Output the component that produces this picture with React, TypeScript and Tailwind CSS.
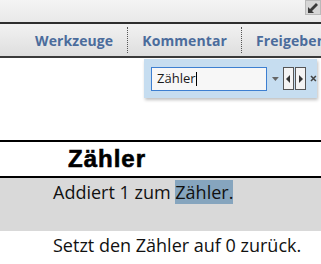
import React from 'react';

const ToolbarItem: React.FC<{ label: string; sep?: boolean }> = ({ label, sep }) => (
  <div className="flex items-center h-full">
    <span className="text-[14px] font-bold text-[#4b6c9c] tracking-[0.1px]">{label}</span>
    {sep && <div className="ml-[14px] mr-[14px] h-[26px] border-l border-dotted border-[#555]" />}
  </div>
);

const App: React.FC = () => {
  return (
    <div className="w-[321px] h-[264px] overflow-hidden bg-white relative" style={{ fontFamily: '"Open Sans", sans-serif' }}>
      {/* top strip */}
      <div className="h-[22px] bg-gradient-to-b from-[#f4f4f4] to-[#e9e9e9] flex justify-end">
        <div className="w-[16px] h-[15px] bg-[#d6d6d6] border border-[#b9b9b9] flex items-center justify-center">
          <svg width="12" height="12" viewBox="0 0 12 12">
            <path d="M1 11 L1 5 L3 7 L9 1 L11 3 L5 9 L7 11 Z" fill="#3a3a3a" />
          </svg>
        </div>
      </div>
      <div className="h-[2px] bg-[#2f2f2f]" />

      {/* toolbar */}
      <div className="h-[34px] bg-gradient-to-b from-[#f2f2f2] to-[#dedede] border-b-2 border-[#3a3a3a] flex items-center pl-[35px]">
        <ToolbarItem label="Werkzeuge" sep />
        <ToolbarItem label="Kommentar" sep />
        <ToolbarItem label="Freigeben" />
      </div>

      {/* search popup */}
      <div className="absolute left-[144px] top-[59px] w-[173px] h-[39px] bg-[#c6ddf0] shadow-[1px_2px_3px_rgba(0,0,0,0.25)] flex items-center pl-[7px]">
        <div className="w-[118px] h-[24px] bg-[#f7f7f7] border border-[#3d7fd1] flex items-center pl-[5px]">
          <span className="text-[13px] text-[#1a1a1a]">Zähler</span>
          <span className="w-[1px] h-[14px] bg-black" />
        </div>
        <svg width="9" height="6" viewBox="0 0 9 6" className="ml-[4px]">
          <path d="M1 1 L8 1 L4.5 5 Z" fill="#666" />
        </svg>
        <div className="ml-[3px] w-[12px] h-[23px] bg-[#f4f4f4] border border-[#555] flex items-center justify-center">
          <svg width="5" height="8" viewBox="0 0 5 8"><path d="M4 0 L0 4 L4 8 Z" fill="#333" /></svg>
        </div>
        <div className="ml-[1px] w-[11px] h-[23px] bg-[#f4f4f4] border border-[#555] flex items-center justify-center">
          <svg width="5" height="8" viewBox="0 0 5 8"><path d="M1 0 L5 4 L1 8 Z" fill="#333" /></svg>
        </div>
        <svg width="7" height="7" viewBox="0 0 7 7" className="ml-[4px]">
          <path d="M1 1 L6 6 M6 1 L1 6" stroke="#444" strokeWidth="1.6" />
        </svg>
      </div>

      {/* document */}
      <div className="pt-[82px]">
        <div className="h-[2px] bg-black" />
        <div className="h-[34px] flex items-center pl-[68px]">
          <span
            className="text-[24px] font-bold text-black leading-none tracking-[1px] [-webkit-text-stroke:0.6px_black]"
            style={{ fontFamily: '"Liberation Sans", Arial, sans-serif' }}
          >
            Zähler
          </span>
        </div>
        <div className="h-[2px] bg-black" />
        <div className="h-[53px] bg-[#d9d9d9] pl-[53px] pt-[3px]">
          <span className="text-[18px] text-[#111] leading-[23px]">
            Addiert 1 zum <span className="bg-[#86a5be]">Zähler.</span>
          </span>
        </div>
        <div className="pl-[53px] pt-[3px] text-[18px] text-[#111] leading-[23px]">
          Setzt den Zähler auf 0 zurück.
        </div>
      </div>
    </div>
  );
};

export default App;
